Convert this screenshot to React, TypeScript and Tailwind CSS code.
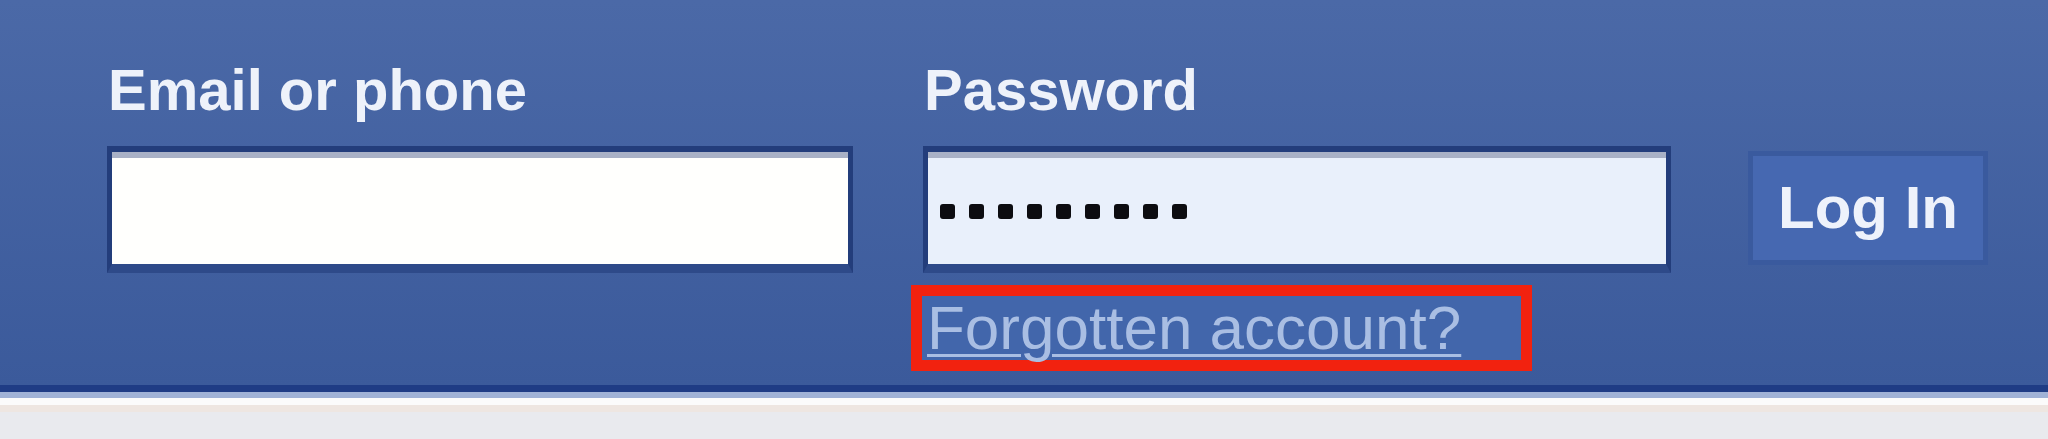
import React from "react";

function Field({ password }: { password?: boolean }) {
  return (
    <div className="h-[127px] border-x-[5px] border-t-[6px] border-b-[9px] border-[#233d7b] border-b-[#2e4a89]">
      <div
        className={
          "h-full border-t-[6px] border-[#a9b1c6] flex items-center pl-[12px] gap-[14px] " +
          (password ? "bg-[#e9f0fb]" : "bg-[#fffffd]")
        }
      >
        {password &&
          Array.from({ length: 9 }).map((_, i) => (
            <div key={i} className="w-[15px] h-[15px] rounded-[3px] bg-[#0c0c10]" />
          ))}
      </div>
    </div>
  );
}

export default function App() {
  return (
    <div
      className="w-[2048px] h-[439px] flex flex-col overflow-hidden"
      style={{ fontFamily: '"Liberation Sans", Arial, Helvetica, sans-serif' }}
    >
      <div className="h-[385px] shrink-0 bg-linear-to-b from-[#4b69a7] to-[#3b5a9b] pl-[107px] pt-[61px] flex items-start">
        <div className="w-[746px] flex flex-col">
          <div className="h-[58px] pl-[1px] text-[58px] leading-[58px] font-bold text-[#eef2fa]">
            Email or phone
          </div>
          <div className="mt-[27px]">
            <Field />
          </div>
        </div>
        <div className="ml-[70px] w-[748px] flex flex-col">
          <div className="h-[58px] pl-[1px] text-[58px] leading-[58px] font-bold text-[#eef2fa]">
            Password
          </div>
          <div className="mt-[27px]">
            <Field password />
          </div>
          <div className="mt-[12px] -ml-[12px] w-[621px] h-[86px] border-[11px] border-[#f2220f] bg-[#4266ab] pl-[5px]">
            <span className="text-[62px] leading-[64px] text-[#a9bee3] underline decoration-[3px] underline-offset-[5px] whitespace-nowrap">
              Forgotten account?
            </span>
          </div>
        </div>
        <button className="ml-[77px] mt-[90px] w-[240px] h-[114px] border-[5px] border-[#3a5a9e] bg-[#4668b1] flex items-center justify-center text-[60px] font-bold text-[#eef2fb]">
          Log In
        </button>
      </div>
      <div className="h-[7px] shrink-0 bg-[#1f3c85]" />
      <div className="h-[6px] shrink-0 bg-[#a0b2d6]" />
      <div className="h-[7px] shrink-0 bg-[#fbfbfb]" />
      <div className="h-[7px] shrink-0 bg-[#eee6e1]" />
      <div className="flex-1 bg-[#e9eaee]" />
    </div>
  );
}
